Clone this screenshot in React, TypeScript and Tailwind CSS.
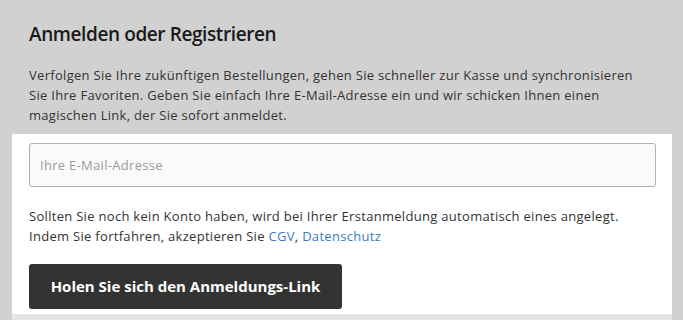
export default function App() {
  return (
    <div
      className="h-[320px] w-[683px] overflow-hidden bg-[#d1d1d1]"
      style={{ fontFamily: '"Open Sans", "Liberation Sans", sans-serif' }}
    >
      <div className="px-[29px] pt-[22px]">
        <h2 className="text-[19px] font-semibold leading-[24px] tracking-[-0.4px] text-[#1a1a1a]">
          Anmelden oder Registrieren
        </h2>
        <p className="mt-[19px] text-[13px] leading-[20px] tracking-[0.3px] text-[#333]">
          Verfolgen Sie Ihre zukünftigen Bestellungen, gehen Sie schneller zur Kasse und synchronisieren
          <br />
          Sie Ihre Favoriten. Geben Sie einfach Ihre E-Mail-Adresse ein und wir schicken Ihnen einen
          <br />
          magischen Link, der Sie sofort anmeldet.
        </p>
      </div>

      <div className="ml-[12px] mt-[9px] w-[660px] border-b-[6px] border-[#e4e4e4] bg-white px-[17px] pt-[9px] pb-[5px]">
        <input
          type="email"
          placeholder="Ihre E-Mail-Adresse"
          className="block h-[44px] w-[627px] rounded-[3px] border border-[#aab4bf] bg-[#fafafa] px-[10px] text-[13px] tracking-[0.3px] text-[#333] placeholder:text-[#9a9a9a] outline-none"
        />
        <p className="mt-[19px] text-[13px] leading-[20px] tracking-[0.3px] text-[#333]">
          Sollten Sie noch kein Konto haben, wird bei Ihrer Erstanmeldung automatisch eines angelegt.
          <br />
          Indem Sie fortfahren, akzeptieren Sie{" "}
          <a href="#" className="text-[#3a7bbf]">
            CGV
          </a>
          ,{" "}
          <a href="#" className="text-[#3a7bbf]">
            Datenschutz
          </a>
        </p>
        <button className="mt-[18px] flex h-[45px] w-[313px] items-center justify-center rounded-[3px] bg-[#333333] text-[15px] font-bold text-white">
          Holen Sie sich den Anmeldungs-Link
        </button>
      </div>
    </div>
  )
}
